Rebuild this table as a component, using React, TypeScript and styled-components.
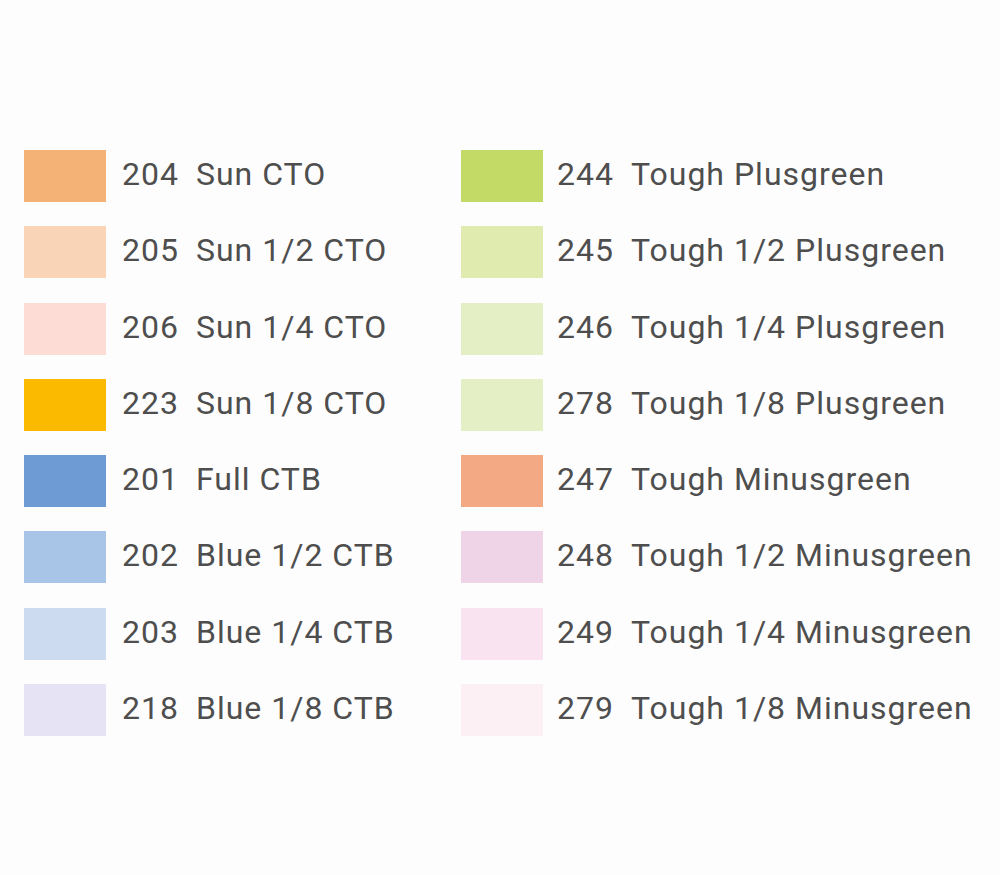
import styled, { createGlobalStyle } from 'styled-components';

type Gel = { num: string; name: string; color: string };

const left: Gel[] = [
  { num: '204', name: 'Sun CTO', color: '#f5b276' },
  { num: '205', name: 'Sun 1/2 CTO', color: '#f9d4b6' },
  { num: '206', name: 'Sun 1/4 CTO', color: '#fcdcd5' },
  { num: '223', name: 'Sun 1/8 CTO', color: '#fbb900' },
  { num: '201', name: 'Full CTB', color: '#6f9bd4' },
  { num: '202', name: 'Blue 1/2 CTB', color: '#a8c5e7' },
  { num: '203', name: 'Blue 1/4 CTB', color: '#ccdbf0' },
  { num: '218', name: 'Blue 1/8 CTB', color: '#e6e4f4' },
];

const right: Gel[] = [
  { num: '244', name: 'Tough Plusgreen', color: '#c3da66' },
  { num: '245', name: 'Tough 1/2 Plusgreen', color: '#e0ebaf' },
  { num: '246', name: 'Tough 1/4 Plusgreen', color: '#e5efc6' },
  { num: '278', name: 'Tough 1/8 Plusgreen', color: '#e5efc6' },
  { num: '247', name: 'Tough Minusgreen', color: '#f3aa84' },
  { num: '248', name: 'Tough 1/2 Minusgreen', color: '#efd4e8' },
  { num: '249', name: 'Tough 1/4 Minusgreen', color: '#f9e3f0' },
  { num: '279', name: 'Tough 1/8 Minusgreen', color: '#fdf0f5' },
];

const GlobalStyle = createGlobalStyle`
  html, body {
    margin: 0;
    padding: 0;
    background: #fdfdfd;
  }
  body {
    font-family: Roboto, "Liberation Sans", sans-serif;
  }
`;

const GelList = ({ items, gap }: { items: Gel[]; gap: number }) => (
  <Column>
    {items.map(g => (
      <Row key={g.num}>
        <Swatch color={g.color} />
        <Label $gap={gap}>
          <Num>{g.num}</Num>
          {g.name}
        </Label>
      </Row>
    ))}
  </Column>
);

function App() {
  return (
    <>
      <GlobalStyle />
      <Page>
        <GelList items={left} gap={16} />
        <GelList items={right} gap={14} />
      </Page>
    </>
  );
}

export default App;

const Page = styled.div`
  width: 1000px;
  height: 875px;
  box-sizing: border-box;
  padding: 150px 0 0 24px;
  display: grid;
  grid-template-columns: 437px 1fr;
`;

const Column = styled.div`
  display: flex;
  flex-direction: column;
  gap: 24.3px;
`;

const Row = styled.div`
  display: flex;
  align-items: center;
  height: 52px;
`;

const Swatch = styled.div<{ color: string }>`
  width: 82px;
  height: 52px;
  flex-shrink: 0;
  background: ${p => p.color};
`;

const Label = styled.span<{ $gap: number }>`
  margin-left: ${p => p.$gap}px;
  font-size: 32px;
  letter-spacing: 1px;
  color: #4e4e4e;
  white-space: nowrap;
  line-height: 1;
  padding-bottom: 4px;
`;

const Num = styled.span`
  margin-right: 17px;
`;
